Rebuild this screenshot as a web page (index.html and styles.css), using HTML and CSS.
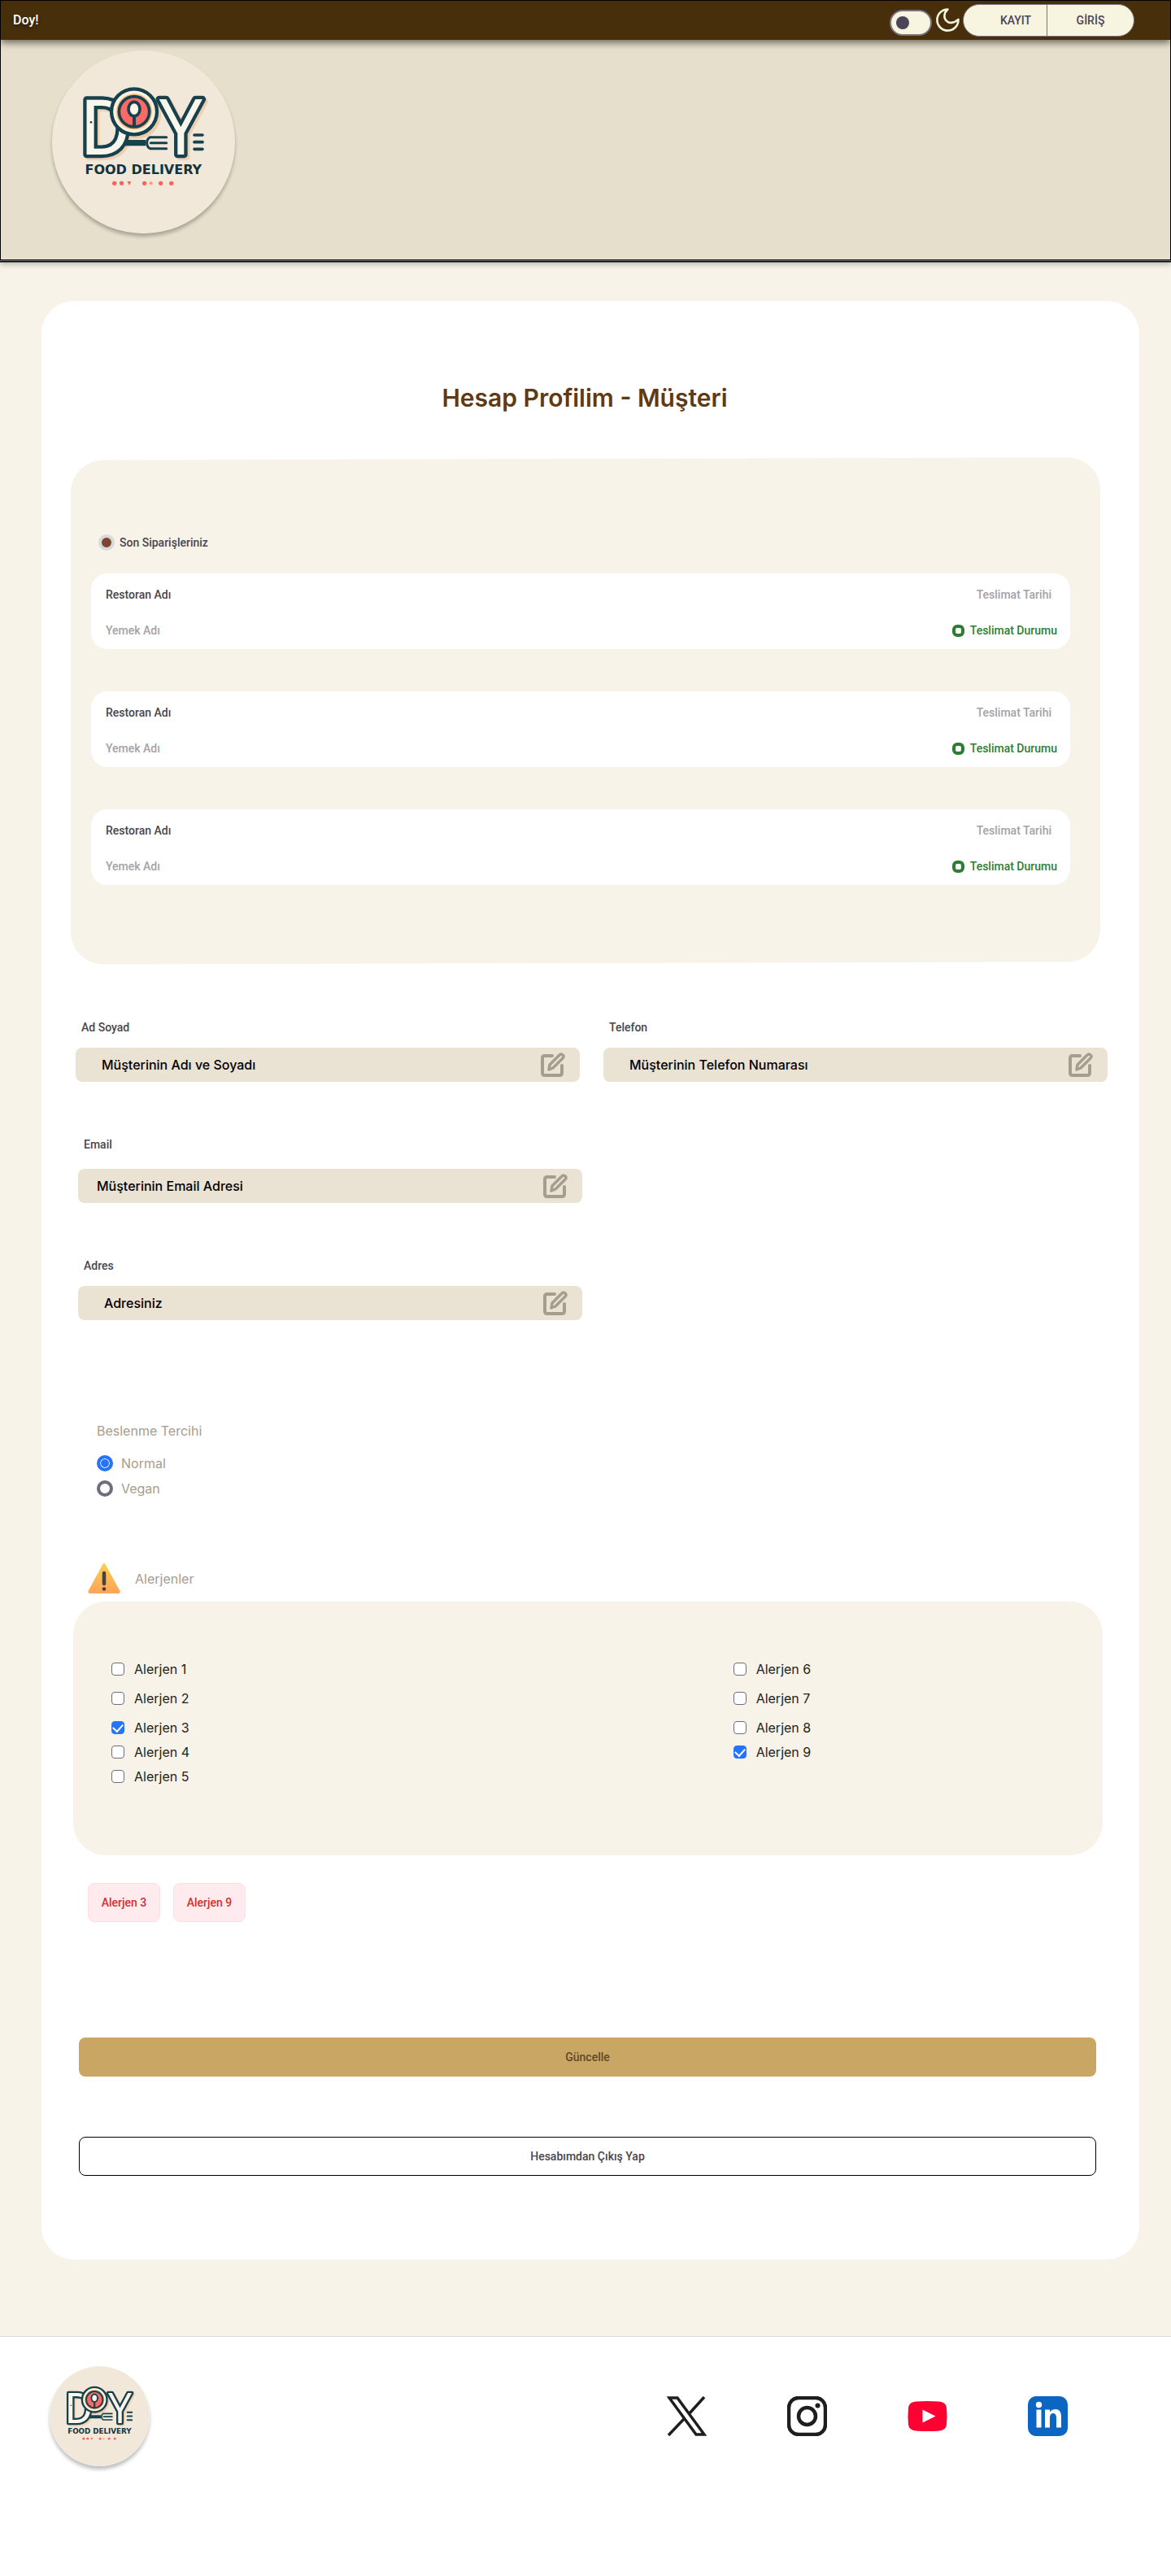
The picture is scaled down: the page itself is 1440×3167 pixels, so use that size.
FILE: index.html
```html
<!DOCTYPE html>
<html lang="tr">
<head>
<meta charset="utf-8">
<meta name="viewport" content="width=device-width, initial-scale=1">
<title>Doy! - Hesap Profilim</title>
<link rel="stylesheet" href="styles.css">
</head>
<body>
<svg class="sprite" aria-hidden="true">
  <symbol id="logo" viewBox="192 186 675 675">
    <circle cx="529.500" cy="523.500" r="337.500" fill="#f2e8d9"/>
    <circle cx="506" cy="424" r="88" fill="#eccdb0"/>
    <g class="logo-letters"><text class="logo-d" x="296" y="570">D</text><text class="logo-y" x="667" y="570">Y</text></g>
    <path d="M462 527h76" fill="none" stroke="#17414c" stroke-width="22"/>
    <path d="M614 506h-60q-12 6-12 21t12 21h60M556 527h58" fill="none" stroke="#17414c" stroke-width="9" stroke-linecap="round"/>
    <circle cx="495" cy="412" r="84" fill="#fbf1e1" stroke="#17414c" stroke-width="13"/>
    <circle cx="495" cy="412" r="66" fill="#f5b878"/>
    <circle cx="495" cy="412" r="56" fill="#fc6a68" stroke="#17414c" stroke-width="11"/>
    <ellipse cx="495" cy="402" rx="21" ry="26" fill="#fbf6ec" stroke="#17414c" stroke-width="11"/>
    <path d="M495 430v36" stroke="#17414c" stroke-width="12"/>
    <path d="M717 498h30M717 524h30M717 550h30" stroke="#17414c" stroke-width="11" stroke-linecap="round"/>
    <circle cx="336" cy="451" r="4" fill="#17414c"/>
    <text class="logo-name" x="529" y="642">FOOD DELIVERY</text>
    <g fill="#fc625c"><circle cx="422" cy="676" r="8"/><rect x="441" y="668" width="15" height="15" rx="5"/><path d="M469 669h15l-7 15z"/><circle cx="533" cy="676" r="8"/><circle cx="557" cy="676" r="6" fill="#fc9a78"/><circle cx="593" cy="676" r="8"/><circle cx="632" cy="676" r="8"/></g>
  </symbol>
  <symbol id="edit" viewBox="0 0 30 30">
    <path d="M14 4H5Q2 4 2 7V25Q2 28 5 28H23Q26 28 26 25V16" fill="none" stroke="currentColor" stroke-width="4" stroke-linecap="round"/>
    <path d="M10 21l1-6L23 3q2-2 4 0t0 4L15 19z" fill="none" stroke="currentColor" stroke-width="3.500" stroke-linejoin="round"/>
  </symbol>
</svg>

<header class="header">
  <div class="topbar">
    <a class="brand" href="#">Doy!</a>
    <div class="topbar-actions">
      <input class="switch" type="checkbox" role="switch" aria-label="Koyu tema">
      <svg class="moon" viewBox="0 0 24 24" aria-hidden="true"><path d="M12.300 2.500C5 9 13 19 21.500 11.200A9.200 9.200 0 1 1 12.300 2.500z" fill="none" stroke="currentColor" stroke-width="1.800" stroke-linejoin="round"/></svg>
      <div class="auth">
        <button class="auth-button auth-register" type="button">KAYIT</button>
        <button class="auth-button" type="button">GİRİŞ</button>
      </div>
    </div>
  </div>
  <div class="hero">
    <svg class="logo" role="img" aria-label="Doy Food Delivery"><use href="#logo"/></svg>
  </div>
</header>

<main class="main">
  <form class="card">
    <h1 class="title">Hesap Profilim - Müşteri</h1>

    <section class="orders">
      <h2 class="orders-title"><span class="dot"></span>Son Siparişleriniz</h2>
      <ul class="order-list">
        <li class="order">
          <span class="restaurant">Restoran Adı</span><span class="date">Teslimat Tarihi</span>
          <span class="meal">Yemek Adı</span><span class="status"><span class="ring"></span>Teslimat Durumu</span>
        </li>
        <li class="order">
          <span class="restaurant">Restoran Adı</span><span class="date">Teslimat Tarihi</span>
          <span class="meal">Yemek Adı</span><span class="status"><span class="ring"></span>Teslimat Durumu</span>
        </li>
        <li class="order">
          <span class="restaurant">Restoran Adı</span><span class="date">Teslimat Tarihi</span>
          <span class="meal">Yemek Adı</span><span class="status"><span class="ring"></span>Teslimat Durumu</span>
        </li>
      </ul>
    </section>

    <div class="fields">
      <div class="field">
        <label for="name">Ad Soyad</label>
        <div class="box"><input id="name" type="text" value="Müşterinin Adı ve Soyadı"><button class="edit" type="button" aria-label="Ad Soyad düzenle"><svg><use href="#edit"/></svg></button></div>
      </div>
      <div class="field">
        <label for="phone">Telefon</label>
        <div class="box"><input id="phone" type="text" value="Müşterinin Telefon Numarası"><button class="edit" type="button" aria-label="Telefon düzenle"><svg><use href="#edit"/></svg></button></div>
      </div>
      <div class="field field-email">
        <label for="email">Email</label>
        <div class="box"><input id="email" type="text" value="Müşterinin Email Adresi"><button class="edit" type="button" aria-label="Email düzenle"><svg><use href="#edit"/></svg></button></div>
      </div>
      <div class="field field-address">
        <label for="address">Adres</label>
        <div class="box"><input id="address" type="text" value="Adresiniz"><button class="edit" type="button" aria-label="Adres düzenle"><svg><use href="#edit"/></svg></button></div>
      </div>
    </div>

    <fieldset class="diet">
      <legend>Beslenme Tercihi</legend>
      <label class="diet-option"><input type="radio" name="diet" checked>Normal</label>
      <label class="diet-option"><input type="radio" name="diet">Vegan</label>
    </fieldset>

    <h2 class="allergen-title">
      <svg class="warning" viewBox="0 0 40 37" aria-hidden="true">
        <defs><linearGradient id="amber" x1="0" y1="0" x2="0" y2="1"><stop offset="0" stop-color="#fbd04c"/><stop offset="1" stop-color="#ffa35a"/></linearGradient></defs>
        <path d="M18.500 1Q20-1 21.500 1L39.500 34Q40 37 38 37H2Q0 37 .500 34z" fill="url(#amber)"/>
        <path d="M20 12v13" stroke="#4a4048" stroke-width="4.500" stroke-linecap="round"/><circle cx="20" cy="31.500" r="2.300" fill="#4a4048"/>
      </svg>
      Alerjenler
    </h2>
    <section class="allergens">
      <div class="allergen-column">
        <label class="check"><input type="checkbox">Alerjen 1</label>
        <label class="check"><input type="checkbox">Alerjen 2</label>
        <label class="check"><input type="checkbox" checked>Alerjen 3</label>
        <label class="check"><input type="checkbox">Alerjen 4</label>
        <label class="check"><input type="checkbox">Alerjen 5</label>
      </div>
      <div class="allergen-column">
        <label class="check"><input type="checkbox">Alerjen 6</label>
        <label class="check"><input type="checkbox">Alerjen 7</label>
        <label class="check"><input type="checkbox">Alerjen 8</label>
        <label class="check"><input type="checkbox" checked>Alerjen 9</label>
      </div>
    </section>
    <div class="tags"><span class="tag">Alerjen 3</span><span class="tag">Alerjen 9</span></div>

    <div class="actions">
      <button class="action action-update" type="submit">Güncelle</button>
      <button class="action action-logout" type="button">Hesabımdan Çıkış Yap</button>
    </div>
  </form>
</main>

<footer class="footer">
  <svg class="footer-logo" role="img" aria-label="Doy Food Delivery"><use href="#logo"/></svg>
  <nav class="social">
    <a href="#" aria-label="X"><svg viewBox="0 0 49 49"><path d="M3 2H13L46 47H36zM46 1L27 22M21 28L2 48" fill="none" stroke="#1e1e1e" stroke-width="3.500"/></svg></a>
    <a href="#" aria-label="Instagram"><svg viewBox="0 0 49 49"><rect x="2" y="2" width="45" height="45" rx="12" fill="none" stroke="#1e1e1e" stroke-width="4.500"/><circle cx="24.500" cy="24.500" r="10.500" fill="none" stroke="#1e1e1e" stroke-width="4.500"/><circle cx="37.500" cy="11.500" r="3" fill="#1e1e1e"/></svg></a>
    <a href="#" aria-label="YouTube"><svg viewBox="0 0 49 49"><path d="M10 6.500Q24.500 5.500 39 6.500Q47 7 48 14Q49 24.500 48 35Q47 42 39 42.500Q24.500 43.500 10 42.500Q2 42 1 35Q0 24.500 1 14Q2 7 10 6.500z" fill="#ff0033"/><path d="M18.500 16.500L34.500 24.500L18.500 32.500z" fill="#fff"/></svg></a>
    <a href="#" aria-label="LinkedIn"><svg viewBox="0 0 49 49"><rect width="49" height="49" rx="10" fill="#0a66c2"/><circle cx="13.500" cy="10.500" r="3.700" fill="#fff"/><path d="M10.500 16.500h6v22h-6zM21 16.500h6v3q2-3.500 7-3.500 7 0 7 9v13.500h-6v-12q0-5.500-4-5.500t-4 5.500v12h-6z" fill="#fff"/></svg></a>
  </nav>
</footer>
</body>
</html>
```
FILE: styles.css
```css
* { box-sizing: border-box; }

body {
  margin: 0;
  background: #fff;
  color: #49454f;
  font-family: Roboto, "Liberation Sans", sans-serif;
  font-size: 14px;
  font-weight: 500;
  line-height: 20px;
}

button, input { font: inherit; color: inherit; margin: 0; }
button { padding: 0; border: 0; background: none; }
h1, h2, ul, fieldset, legend { margin: 0; padding: 0; border: 0; }
svg { display: block; }

.sprite { position: absolute; width: 0; height: 0; }
.logo-letters {
  font-size: 285px;
  font-weight: 400;
  fill: #fbf6ec;
  stroke: #17414c;
  stroke-width: 26px;
  stroke-linejoin: round;
  paint-order: stroke;
  filter: drop-shadow(8px 8px 0 #eccdb0);
}
.logo-d { font-family: Roboto, sans-serif; }
.logo-y { font-family: "Open Sans", sans-serif; text-anchor: middle; }
.logo-name {
  font-family: "DejaVu Sans", sans-serif;
  font-size: 48px;
  font-weight: 700;
  text-anchor: middle;
  fill: #12343f;
}

/* Header */
.header {
  position: relative;
  border: 1px solid #000;
  background: #e6dfcc;
  box-shadow: 0 1px #777, 0 2px #000, 0 3px #777, 0 6px 6px rgba(0, 0, 0, .2);
}
.topbar {
  display: flex;
  justify-content: space-between;
  align-items: center;
  min-height: 48px;
  padding: 0 44px 0 15px;
  background: #472f0c;
  box-shadow: 0 4px 8px rgba(0, 0, 0, .5);
}
.brand { color: #fff; font-size: 16px; text-decoration: none; text-shadow: 0 3px 4px rgba(0, 0, 0, .4); }
.topbar-actions { display: flex; align-items: center; }
.switch {
  appearance: none;
  display: flex;
  align-items: center;
  width: 52px;
  height: 32px;
  margin-top: 6px;
  padding: 0 6px;
  border: 2px solid #79747e;
  border-radius: 16px;
  background: #f7f4df;
}
.switch::before { content: ""; width: 16px; height: 16px; border-radius: 50%; background: #49455b; }
.moon { width: 34px; height: 34px; margin: 0 2px; color: #f7f4df; }
.auth {
  display: flex;
  width: 211px;
  height: 40px;
  overflow: hidden;
  border: 1px solid #79747e;
  border-radius: 20px;
  background: #f7f4df;
}
.auth-button { flex: 1; color: #4a4459; }
.auth-register { flex: 0 0 103px; padding-left: 26px; border-right: 1px solid #79747e; }
.hero { padding: 13px 63px 32px; }
.logo { width: 225px; height: 225px; border-radius: 50%; box-shadow: 0 4px 4px rgba(0, 0, 0, .25); }

/* Profile card */
.main { padding: 50px 39px 94px 51px; background: #f7f3e8; }
.card { padding: 99px 0 103px; border-radius: 40px; background: #fff; }
.title {
  padding-right: 14px;
  color: #5e3a15;
  font-family: Inter, sans-serif;
  font-size: 30px;
  font-weight: 600;
  line-height: 40px;
  text-align: center;
}
.orders {
  position: relative;
  z-index: 0;
  margin: 55px 48px 0 36px;
  padding: 93px 37px 96px 25px;
}
.orders::before {
  content: "";
  position: absolute;
  inset: 0;
  z-index: -1;
  border-radius: 40px;
  background: #f7f3e8;
  transform: skewY(-.15deg);
}
.orders-title { display: flex; align-items: center; gap: 6px; padding-left: 9px; font-size: 14px; font-weight: 500; }
.dot { width: 20px; height: 20px; border: 4px solid #d9d9d9; border-radius: 50%; background: #7d4430; }
.order-list { display: grid; gap: 52px; margin-top: 28px; list-style: none; }
.order {
  display: grid;
  grid-template-columns: 1fr auto;
  row-gap: 24px;
  padding: 16px 16px 13px 18px;
  border-radius: 20px;
  background: #fff;
}
.meal, .date { color: #a4a2a7; }
.date { padding-right: 7px; text-align: right; }
.status { display: flex; align-items: center; gap: 7px; color: #2e7d32; }
.ring { width: 15px; height: 15px; border: 4px solid #2e7d32; border-radius: 6px; background: #fff; }

/* Contact fields */
.fields {
  display: grid;
  grid-template-columns: 1fr 1fr;
  column-gap: 29px;
  margin: 69px 39px 0 42px;
}
.field label { display: block; padding-left: 7px; }
.field-email, .field-address { grid-column: 1; margin: 67px -3px 0 3px; }
.field-email label { margin-bottom: 20px; }
.box {
  display: flex;
  align-items: center;
  min-height: 42px;
  margin-top: 15px;
  padding: 0 18px 0 32px;
  border-radius: 8px;
  background: #eae2d3;
}
.field-email .box { padding-left: 23px; }
.box input {
  flex: 1;
  min-width: 0;
  padding: 0;
  border: 0;
  background: none;
  color: #000;
  font-family: Inter, sans-serif;
  font-size: 16px;
}
.edit, .edit svg { width: 30px; height: 30px; color: #a59d8e; }

/* Diet */
.diet, .allergen-title, .check { font-family: Inter, sans-serif; font-size: 16px; font-weight: 400; }
.diet, .allergen-title { color: #a59d8e; }
.diet { display: grid; gap: 11px; margin: 126px 0 0 68px; }
.diet legend { margin-bottom: 20px; }
.diet-option { display: flex; align-items: center; gap: 10px; }
.diet input {
  appearance: none;
  width: 20px;
  height: 20px;
  border: 4px solid #6f6c7d;
  border-radius: 50%;
  background: #fff;
}
.diet input:checked { border-color: #2474ff; background: #2474ff; box-shadow: inset 0 0 0 1px #fff; }

/* Allergens */
.allergen-title { display: flex; align-items: center; gap: 18px; margin: 82px 0 0 57px; }
.warning { width: 40px; height: 37px; }
.allergens {
  display: grid;
  grid-template-columns: 764fr 454fr;
  margin: 10px 45px 0 39px;
  padding: 73px 0 87px 47px;
  border-radius: 40px;
  background: #f7f3e8;
}
.allergen-column { display: grid; gap: 10px; align-content: start; color: #1e1e1e; }
.check { display: flex; align-items: center; gap: 12px; }
.check:nth-child(1), .check:nth-child(2) { margin-bottom: 6px; }
.check input {
  appearance: none;
  width: 16px;
  height: 16px;
  border: 1px solid #6f6c7d;
  border-radius: 4px;
  background: #fff;
}
.check input:checked { display: grid; place-items: center; border-color: #2474ff; background: #2474ff; }
.check input:checked::before {
  content: "";
  width: 6px;
  height: 10px;
  margin-bottom: 3px;
  border: solid #fff;
  border-width: 0 2px 2px 0;
  transform: rotate(42deg);
}
.tags { display: flex; gap: 16px; margin: 34px 0 0 57px; }
.tag {
  min-width: 89px;
  padding: 13px;
  border: 1px solid #ffdfe2;
  border-radius: 8px;
  background: #ffebee;
  color: #d32f2f;
  text-align: center;
}

/* Actions */
.actions { display: grid; gap: 74px; margin: 142px 53px 0 46px; }
.action { height: 48px; border-radius: 8px; }
.action-update { background: #c9a663; color: #5c4a26; }
.action-logout { border: 1px solid #000; }

/* Footer */
.footer {
  display: flex;
  justify-content: space-between;
  align-items: center;
  padding: 36px 127px 134px 61px;
  border-top: 1px solid #d9d9d9;
}
.footer-logo { width: 123px; height: 123px; border-radius: 50%; box-shadow: 0 4px 4px rgba(0, 0, 0, .25); }
.social { display: flex; gap: 99px; }
.social svg { width: 49px; height: 49px; }
```
